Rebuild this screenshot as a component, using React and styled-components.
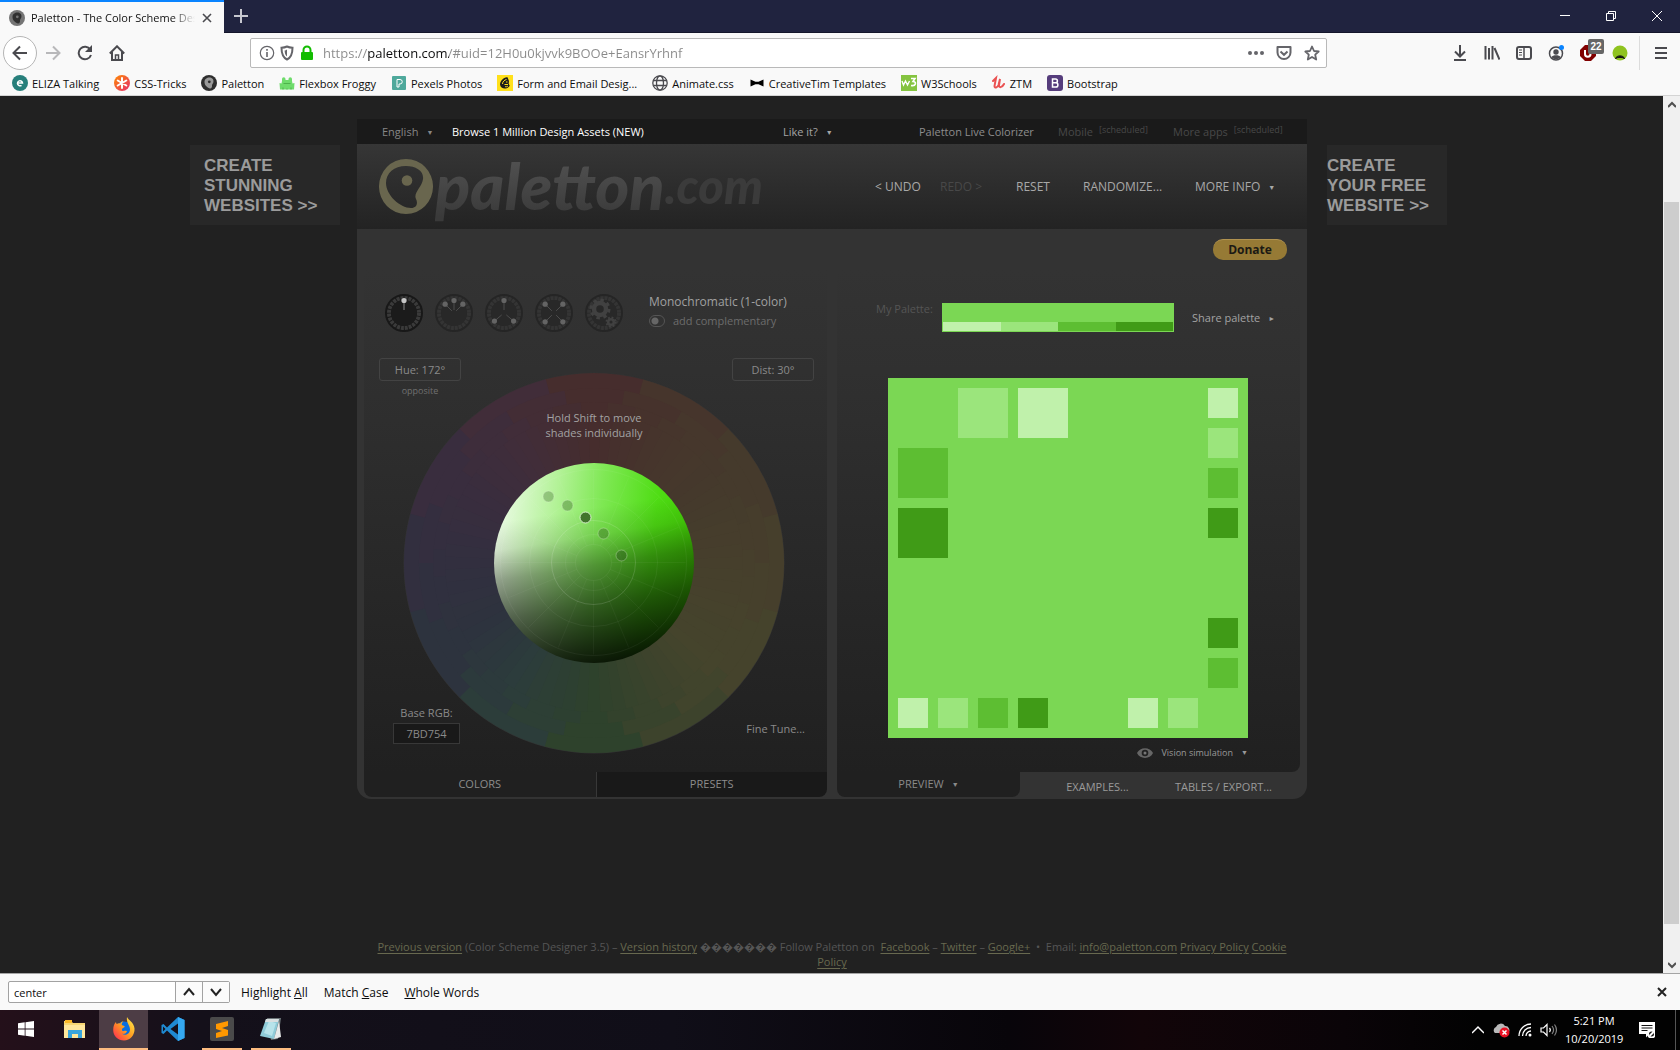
import React from "react";
import styled, { createGlobalStyle, css } from "styled-components";

const ui = '"Open Sans", "Noto Sans", sans-serif';
const shades = {
  base: "#7bd754",
  pale: "#c0f1ab",
  light: "#9be57c",
  mid: "#5dbe32",
  dark: "#409b17",
};

const Global = createGlobalStyle`
  *, *::before, *::after { box-sizing: border-box; }
  body { margin: 0; background: #212121; font-family: ${ui}; font-size: 11px; line-height: 15px; }
  button, input { font: inherit; color: inherit; margin: 0; padding: 0; border: 0; background: none; }
  button { cursor: pointer; white-space: nowrap; }
  a { color: inherit; text-decoration: none; }
  svg { display: block; flex: none; }
`;

const Screen = styled.div`
  display: flex;
  flex-direction: column;
  min-height: 100vh;
`;

/* ---------- browser chrome ---------- */

const TitleBar = styled.header`
  display: flex;
  height: 33px;
  background: #20233f;
  border-bottom: 1px solid #14162b;
  color: #f9f9fa;
`;
const Tab = styled.div`
  display: flex;
  align-items: center;
  gap: 6px;
  width: 224px;
  height: 33px;
  padding: 0 11px 0 9px;
  border-top: 2px solid #0a84ff;
  background: #f9f9f9;
  color: #111;
`;
const TabTitle = styled.span`
  flex: 1;
  overflow: hidden;
  white-space: nowrap;
  mask-image: linear-gradient(to right, #000 86%, transparent 100%);
`;
const IconButton = styled.button`
  display: grid;
  place-items: center;
  flex: none;
  width: ${(p) => p.$w || 32}px;
  height: ${(p) => p.$h || 32}px;
  margin-left: ${(p) => (p.$end ? "auto" : 0)};
  color: ${(p) => p.$color || "#4a4a4f"};
`;
const WindowButtons = styled.div`
  display: flex;
  margin-left: auto;
`;
const Toolbar = styled.nav`
  display: flex;
  align-items: center;
  height: 40px;
  padding: 0 3px;
  background: #f9f9f9;
`;
const BackButton = styled(IconButton)`
  width: 34px;
  height: 34px;
  border: 1px solid #b5b5b5;
  border-radius: 50%;
  background: #fff;
`;
const UrlBar = styled.div`
  display: flex;
  align-items: center;
  flex: 1;
  gap: 4px;
  height: 30px;
  margin: 0 117px;
  padding: 0 6px 0 8px;
  border: 1px solid #b9b9b9;
  border-radius: 2px;
  background: #fff;
  color: #65656a;
`;
const UrlInput = styled.input`
  flex: 1;
  min-width: 0;
  height: 24px;
  margin-left: 4px;
  font-size: 13px;
  outline: none;
  color: transparent;
  background: linear-gradient(to right, #8a8a8a 45px, #0c0c0d 45px, #0c0c0d 126px, #8a8a8a 126px);
  -webkit-background-clip: text;
  background-clip: text;
`;
const UrlActions = styled.div`
  display: flex;
  gap: 12px;
`;
const Separator = styled.span`
  width: 1px;
  height: 34px;
  margin: 0 5px 0 3px;
  background: #dcdcdc;
`;
const Badge = styled.span`
  position: absolute;
  top: 2px;
  left: 16px;
  width: 16px;
  height: 15px;
  border-radius: 2px;
  background: #666;
  color: #fff;
  font: bold 10px/15px "Liberation Sans", sans-serif;
`;
const BadgeButton = styled(IconButton)`
  position: relative;
`;
const Bookmarks = styled.nav`
  display: flex;
  height: 23px;
  padding: 0 0 2px 12px;
  gap: 15px;
  background: #f9f9f9;
  border-bottom: 1px solid #d4d4d4;
`;
const Bookmark = styled.a`
  display: flex;
  align-items: center;
  gap: 4px;
  height: 20px;
  color: #0c0c0d;
  white-space: nowrap;
`;

/* ---------- page ---------- */

const Viewport = styled.div`
  display: flex;
  flex: 1;
`;
const Page = styled.main`
  flex: 1;
  min-width: 0;
  padding: 23px 0 0 1px;
  background: #212121;
`;
const ScrollBar = styled.div`
  display: flex;
  flex-direction: column;
  justify-content: space-between;
  width: 17px;
  background: #f0f0f0;
  color: #505050;
`;
const Thumb = styled.div`
  height: 722px;
  margin: 89px 1px auto;
  background: #cdcdcd;
`;
const Columns = styled.div`
  display: grid;
  grid-template-columns: minmax(0, 1fr) 950px minmax(0, 1fr);
  align-items: start;
`;
const Ad = styled.a`
  justify-self: ${(p) => (p.$side === "left" ? "end" : "start")};
  width: ${(p) => (p.$side === "left" ? 150 : 120)}px;
  margin: 26px ${(p) => (p.$side === "left" ? 17 : 0)}px 0 ${(p) => (p.$side === "left" ? 0 : 20)}px;
  padding: 11px 0 9px ${(p) => (p.$side === "left" ? 14 : 0)}px;
  background: #282828;
  color: #9b9b9b;
  font: bold 17px/20px "Liberation Sans", Arial, sans-serif;
  white-space: pre-line;
`;
const TopStrip = styled.div`
  display: grid;
  grid-template-columns: 70px 1fr 136px 139px 115px 110px;
  align-items: center;
  height: 25px;
  padding: 0 24px 0 25px;
  background: #1a1a1a;
  color: #868686;
  white-space: nowrap;
`;
const StripLink = styled.a`
  color: ${(p) => (p.$tone === "bright" ? "#fff" : p.$tone === "off" ? "#484848" : "#8d8d8d")};
`;
const StripButton = styled.button`
  text-align: left;
  color: ${(p) => (p.$tone === "light" ? "#a5a5a5" : "#868686")};
`;
const Caret = styled.span`
  margin-left: 8px;
  font-size: 7px;
  vertical-align: 1px;
`;
const Scheduled = styled.sup`
  margin-left: 6px;
  font-size: 9px;
  line-height: 0;
  vertical-align: 3px;
`;
const Masthead = styled.div`
  display: flex;
  align-items: center;
  justify-content: space-between;
  height: 85px;
  padding: 0 24px 0 22px;
  background: linear-gradient(#363636, #232323);
`;
const Brand = styled.a`
  display: flex;
  align-items: center;
  font: italic 900 65px/80px Lato, sans-serif;
`;
const BrandName = styled.span`
  margin: 0 0 4px 2px;
  color: transparent;
  background: linear-gradient(#505050 20%, #3a3a3a 90%);
  background-clip: text;
`;
const BrandSuffix = styled.span`
  margin-bottom: 4px;
  padding-right: 4px;
  font-size: 49px;
  color: #3b3b3b;
`;
const Menu = styled.nav`
  display: grid;
  grid-template-columns: 65px 76px 67px 112px 88px;
  font-size: 12px;
`;
const MenuButton = styled.button`
  text-align: left;
  color: ${(p) => (p.disabled ? "#484848" : "#a8a8a8")};
`;
const Body = styled.div`
  padding: 10px 7px 2px;
  background: #333;
  border-radius: 0 0 14px 14px;
`;
const Donate = styled.button`
  display: block;
  width: 74px;
  height: 21px;
  margin: 0 13px 10px auto;
  padding-bottom: 2px;
  border-radius: 10px;
  background: #967a35;
  border-top: 1px solid #b09250;
  color: #1c1a14;
  font-size: 12px;
  font-weight: 700;
`;
const Panels = styled.div`
  display: grid;
  grid-template-columns: 1fr 1fr;
  gap: 10px;
`;
const Panel = styled.section`
  display: flex;
  flex-direction: column;
`;
const PanelBody = styled.div`
  height: 502px;
  background: linear-gradient(#333, #303030 20%, #202020);
  border-radius: ${(p) => (p.$round ? "0 0 8px 0" : "0")};
`;

/* left panel */
const Schemes = styled.div`
  display: flex;
  gap: 12px;
  padding: 24px 0 0 21px;
`;
const SchemeText = styled.div`
  display: flex;
  flex-direction: column;
  gap: 4px;
  margin-left: 14px;
  color: #a0a0a0;
`;
const SchemeName = styled.span`
  font-size: 12px;
`;
const SchemeButton = styled.button`
  width: 38px;
  height: 38px;
`;
const Complement = styled.label`
  display: flex;
  align-items: center;
  gap: 8px;
  color: #6c6c6c;
`;
const Toggle = styled.input.attrs({ type: "checkbox" })`
  appearance: none;
  width: 16px;
  height: 12px;
  border: 1px solid #555;
  border-radius: 6px;
  background: radial-gradient(circle at 5px 5px, #666 3px, transparent 4px);
`;
const Stack = styled.div`
  display: grid;
  margin: 26px 13px 0 15px;
  & > * { grid-area: 1 / 1; }
`;
const Wheel = styled.div`
  display: grid;
  justify-self: start;
  justify-items: center;
  width: 382px;
  height: 382px;
  margin: 14px 0 0 24px;
  & > * { grid-area: 1 / 1; }
`;
const Hint = styled.p`
  margin: 38px 0 0;
  width: 110px;
  text-align: center;
  color: #a3a3a3;
`;
const Disc = styled.div`
  align-self: center;
  width: 200px;
  height: 200px;
  border-radius: 50%;
  background:
    linear-gradient(171deg, transparent 26%, rgba(0,0,0,.1) 38%, rgba(0,0,0,.36) 51%, rgba(0,0,0,.6) 68%, rgba(0,0,0,.9) 94%),
    linear-gradient(97deg, #ecfbe6 4%, #b2f296 30%, #7fe854 50%, #4fdd14 75%, #3fce00 100%);
`;
const HueBox = styled.div`
  display: flex;
  flex-direction: column;
  gap: 2px;
  width: 82px;
  justify-self: ${(p) => (p.$right ? "end" : "start")};
  align-self: start;
`;
const ValueButton = styled.button`
  height: 23px;
  border: 1px solid #434343;
  border-radius: 3px;
  color: #8a8a8a;
`;
const Opposite = styled.button`
  font-size: 9px;
  color: #707070;
`;
const BaseRgb = styled.label`
  display: flex;
  flex-direction: column;
  gap: 3px;
  justify-self: start;
  align-self: end;
  width: 67px;
  margin: 0 0 10px 14px;
  text-align: center;
  color: #8a8a8a;
`;
const RgbInput = styled.input`
  width: 67px;
  height: 21px;
  border: 1px solid #383838;
  background: #191919;
  text-align: center;
`;
const FineTune = styled.button`
  justify-self: end;
  align-self: end;
  margin: 0 9px 18px 0;
  color: #8a8a8a;
`;
const LeftTabs = styled.div`
  display: grid;
  grid-template-columns: 1fr 1fr;
  height: 25px;
  border-radius: 0 0 8px 8px;
  overflow: hidden;
`;
const LeftTab = styled.button`
  padding-bottom: 2px;
  color: #8c8c8c;
  background: ${(p) => (p.$active ? "#202020" : "#191919")};
  & + & { border-left: 1px solid #383838; }
`;

/* right panel */
const PaletteRow = styled.div`
  display: flex;
  align-items: center;
  padding: 33px 0 0 39px;
  color: #a3a3a3;
`;
const PaletteLabel = styled.span`
  align-self: start;
  width: 66px;
  line-height: 12px;
  color: #555;
`;
const Strip = styled.div`
  display: flex;
  align-items: flex-end;
  width: 232px;
  height: 29px;
  padding: 1px;
  margin-right: 18px;
  background: ${shades.base};
`;
const StripShade = styled.span`
  flex: 1;
  height: 9px;
  background: ${(p) => p.$c};
`;
const Preview = styled.div`
  display: grid;
  grid-template: repeat(36, 10px) / repeat(36, 10px);
  width: 360px;
  margin: 46px 0 0 51px;
  background: ${shades.base};
`;
const Square = styled.span`
  grid-column: ${(p) => p.$x + 1} / span ${(p) => p.$s};
  grid-row: ${(p) => p.$y + 1} / span ${(p) => p.$s};
  background: ${(p) => p.$c};
`;
const Vision = styled.button`
  display: flex;
  align-items: center;
  gap: 8px;
  margin: 7px 52px 0 auto;
  font-size: 9px;
  line-height: 15px;
  color: #999;
`;
const RightTabs = styled.div`
  display: grid;
  grid-template-columns: 183px 155px 1fr;
  height: 25px;
  color: #9a9a9a;
`;
const PreviewTab = styled.button`
  padding-bottom: 2px;
  border-radius: 0 0 8px 8px;
  background: #202020;
  color: #8a8a8a;
`;
const OutTab = styled.button`
  padding-top: 3px;
  ${(p) => p.$last && css`text-align: left;`}
`;
const Footer = styled.footer`
  width: 914px;
  margin: 140px auto 0;
  text-align: center;
  color: #555;
  a { color: #68694f; text-decoration: underline; text-underline-offset: 2px; }
`;

/* ---------- find bar and taskbar ---------- */

const FindBar = styled.form`
  display: flex;
  align-items: center;
  height: 37px;
  padding: 0 8px;
  border-top: 1px solid #a5a5a5;
  background: #f9f9f9;
  color: #0c0c0d;
  font-size: 12px;
`;
const FindGroup = styled.div`
  display: flex;
  height: 22px;
  margin-right: 11px;
  border: 1px solid #a2a2a2;
  border-radius: 2px;
  background: #fff;
`;
const FindInput = styled.input`
  width: 166px;
  padding: 0 5px;
  font-size: 11px;
`;
const FindStep = styled(IconButton)`
  width: 27px;
  height: 20px;
  border-left: 1px solid #a2a2a2;
  background: #fbfbfb;
  color: #222;
`;
const FindOption = styled.button`
  margin-right: 16px;
`;
const TaskBar = styled.footer`
  display: flex;
  align-items: center;
  height: 40px;
  padding-left: 1px;
  background: linear-gradient(to right, #24101a, #14101a 12%, #100e18 40%, #08050a 60%, #120509 68%, #0a0408 80%, #020202 88%);
  color: #fff;
`;
const Task = styled.button`
  display: grid;
  place-items: center;
  width: 49px;
  height: 40px;
  padding-bottom: 2px;
  background:
    linear-gradient(${(p) => (p.$open ? "#fdbc80, #fdbc80" : "transparent, transparent")})
      center bottom / ${(p) => (p.$active ? 49 : 40)}px 2px no-repeat,
    ${(p) => (p.$active ? "#4d3d45" : "transparent")};
`;
const Tray = styled.div`
  display: flex;
  align-items: center;
  gap: 8px;
  height: 40px;
  margin-left: auto;
  padding-right: 4px;
`;
const Clock = styled.time`
  width: 58px;
  line-height: 18px;
  text-align: center;
  white-space: nowrap;
`;
const Notice = styled.div`
  display: flex;
  align-items: center;
  height: 40px;
  padding: 0 20px 0 8px;
  border-right: 1px solid #555;
`;

/* ---------- drawings ---------- */

const Svg = ({ s = 16, w, h, box, children, ...rest }) => (
  <svg
    width={w || s}
    height={h || s}
    viewBox={box || `0 0 ${w || s} ${h || s}`}
    fill="none"
    stroke="currentColor"
    strokeWidth="2"
    aria-hidden="true"
    {...rest}
  >
    {children}
  </svg>
);

const PalettonIcon = ({ back, face }) => (
  <Svg stroke="none">
    <circle cx="8" cy="8" r="8" fill={back} />
    <path d="M8.5 2.5c3 0 4.600 2.400 3.800 4.900-.6 1.500-1.500 2-1.300 3.400.2 1.400-.7 3-2.200 2.600C6 12.600 3.500 10 3.500 7s2.300-4.500 5-4.500z" fill={face} />
    <circle cx="8.300" cy="6.800" r="1.400" fill={back} />
  </Svg>
);

const bookmarks = [
  ["ELIZA Talking", <Svg stroke="none"><circle cx="8" cy="8" r="8" fill="#277f7b" /><path d="M5.500 8h5a2.500 2.500 0 1 0-1 2.300" fill="none" stroke="#fff" strokeWidth="1.500" /></Svg>],
  ["CSS-Tricks", <Svg stroke="none"><defs><linearGradient id="ct" x1="0" y1="0" x2="1" y2="1"><stop offset="0" stopColor="#ff8a00" /><stop offset="1" stopColor="#e52e71" /></linearGradient></defs><circle cx="8" cy="8" r="8" fill="url(#ct)" /><path d="M8 3v10M3.700 5.500l8.600 5M12.300 5.500l-8.600 5" stroke="#fff" strokeWidth="2" strokeLinecap="round" /></Svg>],
  ["Paletton", <PalettonIcon back="#2f2f2f" face="#9a9a9a" />],
  ["Flexbox Froggy", <Svg stroke="none"><path d="M3 6V4a1.500 1.500 0 0 1 3.500 0v1h3V4A1.500 1.500 0 0 1 13 4v2l.5 2.500L15.500 8l-.5 6.500H1L.5 8l2 .5z" fill="#6fdc6c" /><path d="M4 14.500v-2M8 14.500v-1M12 14.500v-2M4.500 8.500h7" stroke="#4db34b" strokeWidth="1" /></Svg>],
  ["Pexels Photos", <Svg stroke="none"><rect x="1" y="1" width="14" height="14" rx="1" fill="#4fa99c" /><path d="M6 12V4.500h3a2.200 2.200 0 0 1 0 4.500H8v3z" stroke="#fff" strokeWidth="1" fill="none" /></Svg>],
  ["Form and Email Desig...", <Svg stroke="none"><rect width="16" height="16" fill="#ffe01b" /><path d="M10.500 2.200C7 1.500 3 6 3 9.500c.3 3 3 4.500 6 4 2-.4 3.200-1.600 3.700-3l-1-1.500.3-3z" fill="#1c1c1c" /><path d="M5.500 9c0-2.500 2-4 4-4.500M7.500 9.500h3.500M9 7h1.500M8 11.500c1 .5 2 .3 3-.5" stroke="#ffe01b" strokeWidth="1" /></Svg>],
  ["Animate.css", <Svg strokeWidth="1.300" color="#4a4a4f"><circle cx="8" cy="8" r="7.200" /><ellipse cx="8" cy="8" rx="3.500" ry="7.200" /><path d="M1.500 5.500h13M1.500 10.500h13" /></Svg>],
  ["CreativeTim Templates", <Svg stroke="none"><path d="M1.500 4.500l5 2.200h3l5-2.200v7l-5-2.200h-3l-5 2.200z" fill="#000" /></Svg>],
  ["W3Schools", <Svg stroke="none"><rect width="16" height="16" y="0" fill="#85c440" /><path d="M1 6l1.500 4L4.500 6l2 4L8.500 6" stroke="#fff" strokeWidth="1.400" /><path d="M10 3.500h4L12 6.500c4 0 3 5-2 4" stroke="#fff" strokeWidth="1.600" /></Svg>],
  ["ZTM", <Svg w={14} h={16} strokeLinecap="round" color="#ea5252"><path d="M1 6l3-3-1.500 8c0 2.500 3 2 4-1L8 4 7 10c-.3 3 3 3 5-1" strokeWidth="2" /></Svg>],
  ["Bootstrap", <Svg stroke="none"><rect width="16" height="16" rx="3" fill="#563d7c" /><path d="M5.500 4h3a1.900 1.900 0 0 1 0 3.800h-3zM5.500 7.800h3.300a2.100 2.100 0 0 1 0 4.200H5.500z" stroke="#fff" strokeWidth="1.500" /></Svg>],
];

const polar = (r, deg, c = 191) => {
  const a = ((deg - 90) * Math.PI) / 180;
  return [c + r * Math.cos(a), c + r * Math.sin(a)];
};
const slice = (r0, r1, a0, a1) => {
  const [x0, y0] = polar(r1, a0);
  const [x1, y1] = polar(r1, a1);
  const [x2, y2] = polar(r0, a1);
  const [x3, y3] = polar(r0, a0);
  return `M${x0} ${y0}A${r1} ${r1} 0 0 1 ${x1} ${y1}L${x2} ${y2}A${r0} ${r0} 0 0 0 ${x3} ${y3}Z`;
};
const hues = [
  [0, 70, 45, 45], [30, 70, 53, 44], [60, 69, 58, 44], [90, 70, 63, 44], [130, 69, 68, 44],
  [150, 61, 67, 44], [180, 46, 66, 44], [215, 44, 60, 60], [240, 45, 51, 62], [270, 50, 47, 63],
  [300, 57, 45, 62], [330, 65, 45, 57], [360, 70, 45, 45],
];
const hueAt = (deg) => {
  const d = (deg + 360) % 360;
  const i = Math.max(1, hues.findIndex((h) => h[0] >= d));
  const [a, b] = [hues[i - 1], hues[i]];
  const t = (d - a[0]) / (b[0] - a[0]);
  return `rgb(${[1, 2, 3].map((k) => Math.round(a[k] + (b[k] - a[k]) * t)).join(",")})`;
};
const rings = [
  { r0: 98, r1: 150, step: 5 },
  { r0: 149, r1: 162, step: 10 },
  { r0: 161, r1: 176, step: 20 },
  { r0: 175, r1: 190, step: 30 },
];
const HueWheel = () => (
  <svg width="382" height="382" viewBox="0 0 382 382" role="img" aria-label="Hue wheel">
    <circle cx="191" cy="191" r="190.500" fill="#333" />
    {rings.map(({ r0, r1, step }) =>
      Array.from({ length: 360 / step }, (_, i) => (
        <path key={`${r1}-${i}`} d={slice(r0, r1, (i - 0.5) * step, (i + 0.5) * step + 0.300)} fill={hueAt(i * step)} />
      ))
    )}
  </svg>
);

const spots = [
  [54.500, 33.500, 0.300], [73.500, 42.500, 0.350], [91.500, 54.500, 1], [109.500, 70.500, 0.350], [127.500, 92.500, 0.450],
];
const ShadeMarks = () => (
  <svg width="200" height="200" viewBox="0 0 200 200" fill="none" role="img" aria-label="Shade picker">
    {[18, 28, 42, 64, 93].map((r) => (
      <circle key={r} cx="99.500" cy="99.500" r={r} stroke="#fff" strokeOpacity={r === 42 ? 0.140 : 0.050} />
    ))}
    <g stroke="#fff" strokeOpacity=".04">
      {Array.from({ length: 16 }, (_, i) => {
        const [x0, y0] = polar(18, i * 22.500, 99.500);
        const [x1, y1] = polar(92, i * 22.500, 99.500);
        return <path key={i} d={`M${x0} ${y0}L${x1} ${y1}`} />;
      })}
    </g>
    {spots.map(([x, y, o]) => (
      <circle key={x} cx={x} cy={y} r="5.500" fill={o === 1 ? "#41752c" : "#2f5a1e"} fillOpacity={o}
        stroke="#dff5d5" strokeOpacity={o === 1 ? 0.900 : 0.350} />
    ))}
  </svg>
);

const Scheme = ({ pins = [], active, gears }) => (
  <svg width="38" height="38" viewBox="0 0 38 38" fill="none" aria-hidden="true">
    <circle cx="19" cy="19" r="18" fill={active ? "#1b1b1b" : "#2a2a2a"} stroke={active ? "#181818" : "#252525"} strokeWidth="2" />
    <circle cx="19" cy="19" r="15" stroke={active ? "#3a3a3a" : "#343434"} strokeWidth="4" strokeDasharray="2.900 1.030" />
    <circle cx="19" cy="19" r="13" fill={active ? "#1b1b1b" : "#282828"} />
    {pins.map((a) => {
      const [x, y] = polar(12.500, a, 19);
      const [x1, y1] = polar(3, a, 19);
      return (
        <g key={a}>
          <path d={`M${x1} ${y1}L${x} ${y}`} stroke={active ? "#888" : "#4c4c4c"} />
          <circle cx={x} cy={y} r="2.600" fill={active ? "#c6c6c6" : "#646464"} />
        </g>
      );
    })}
    {gears && (
      <g stroke="#414141">
        <circle cx="15" cy="15" r="6" strokeWidth="4.500" />
        <circle cx="15" cy="15" r="9" strokeWidth="3" strokeDasharray="3.500 3.570" />
        <circle cx="26" cy="28" r="2.800" strokeWidth="2.500" />
        <circle cx="26" cy="28" r="4.500" strokeWidth="2" strokeDasharray="1.800 1.730" />
      </g>
    )}
  </svg>
);

const squares = [
  [7, 1, 5, "light"], [13, 1, 5, "pale"], [1, 7, 5, "mid"], [1, 13, 5, "dark"],
  [32, 1, 3, "pale"], [32, 5, 3, "light"], [32, 9, 3, "mid"], [32, 13, 3, "dark"],
  [32, 24, 3, "dark"], [32, 28, 3, "mid"],
  [1, 32, 3, "pale"], [5, 32, 3, "light"], [9, 32, 3, "mid"], [13, 32, 3, "dark"],
  [24, 32, 3, "pale"], [28, 32, 3, "light"],
];

const Chrome = () => (
  <>
    <TitleBar>
      <Tab>
        <PalettonIcon back="#757575" face="#303030" />
        <TabTitle>Paletton - The Color Scheme Designer</TabTitle>
        <IconButton $w={12} $h={16} aria-label="Close tab">
          <Svg s={10} strokeWidth="1.600"><path d="M1 1l8 8M9 1l-8 8" /></Svg>
        </IconButton>
      </Tab>
      <IconButton $w={34} $color="#c6c7cf" aria-label="New tab">
        <Svg s={14}><path d="M7 0v14M0 7h14" /></Svg>
      </IconButton>
      <WindowButtons>
        <IconButton $w={46} $color="#fff" aria-label="Minimize"><Svg s={10} strokeWidth="1"><path d="M0 4.500h10" /></Svg></IconButton>
        <IconButton $w={46} $color="#fff" aria-label="Restore"><Svg s={10} strokeWidth="1"><path d="M.5 2.500h7v7h-7zM2.500 2.500v-2h7v7h-2" /></Svg></IconButton>
        <IconButton $w={46} $color="#fff" aria-label="Close"><Svg s={10} strokeWidth="1"><path d="M0 0l10 10M10 0L0 10" /></Svg></IconButton>
      </WindowButtons>
    </TitleBar>
    <Toolbar>
      <BackButton aria-label="Back"><Svg><path d="M15 8H1.500M8 1.500L1.500 8 8 14.500" /></Svg></BackButton>
      <IconButton $color="#b8b8ba" aria-label="Forward"><Svg><path d="M1 8h13.500M8 1.500L14.500 8 8 14.500" /></Svg></IconButton>
      <IconButton aria-label="Reload"><Svg><path d="M13.300 4.500A6.300 6.300 0 1 0 14 10" /><path d="M15 0v7H8z" fill="currentColor" stroke="none" /></Svg></IconButton>
      <IconButton aria-label="Home"><Svg><path d="M.8 8.500L8 1.300l7.200 7.200M3 7v8h10V7" /><path d="M6.500 15v-5h3v5z" strokeWidth="1.500" /></Svg></IconButton>
      <UrlBar>
        <Svg strokeWidth="1.200"><circle cx="8" cy="8" r="6.700" /><path d="M8 7v5M8 4v1.800" strokeWidth="1.600" /></Svg>
        <Svg><path d="M8 1.500c2 1 4 1.200 5.500 1.200 0 6-1.500 9.800-5.500 11.800C4 12.500 2.500 8.700 2.500 2.700 4 2.700 6 2.500 8 1.500z" /><path d="M8 4.500v7c-1.500-1-2.300-3-2.400-6 1 0 1.700-.3 2.400-1z" fill="currentColor" stroke="none" /></Svg>
        <Svg color="#12bc00"><rect x="2" y="7" width="12" height="8" rx="1" fill="currentColor" stroke="none" /><path d="M4.500 8V5a3.500 3.500 0 0 1 7 0v3" /></Svg>
        <UrlInput aria-label="Address" defaultValue="https://paletton.com/#uid=12H0u0kjvvk9BOOe+EansrYrhnf" />
        <UrlActions>
          <Svg stroke="none" fill="currentColor"><circle cx="2" cy="8" r="2" /><circle cx="8" cy="8" r="2" /><circle cx="14" cy="8" r="2" /></Svg>
          <Svg><path d="M1.500 2h13v5.500a6.500 6.500 0 0 1-13 0z" strokeLinejoin="round" /><path d="M4.500 6.500L8 9.800l3.500-3.300" /></Svg>
          <Svg><path d="M8 1.500l2 4.500 4.700.5-3.500 3.200 1 4.800L8 12l-4.200 2.500 1-4.800L1.300 6.500 6 6z" strokeLinejoin="round" strokeWidth="1.800" /></Svg>
        </UrlActions>
      </UrlBar>
      <IconButton aria-label="Downloads"><Svg><path d="M8 0v11M3 6.500l5 5 5-5M2 15h12" /></Svg></IconButton>
      <IconButton aria-label="Library"><Svg><path d="M1.500 1v13.500M5 3v11.500M8.500 1v13.500M10.500 3l5 11.500" /></Svg></IconButton>
      <IconButton aria-label="Sidebars"><Svg><rect x="1" y="2" width="14" height="12" rx="2" /><path d="M8 2v12" strokeWidth="1.500" /><path d="M3 5h3M3 7.500h3M3 10h3" strokeWidth="1" /></Svg></IconButton>
      <IconButton aria-label="Account"><Svg strokeWidth="1.500"><circle cx="8" cy="8.500" r="6.500" /><circle cx="8" cy="7" r="2.700" fill="currentColor" stroke="none" /><path d="M3.500 12c1-2.500 8-2.500 9 0-2 3-7 3-9 0z" fill="currentColor" stroke="none" /><circle cx="13.500" cy="2.500" r="2.500" fill="#0a84ff" stroke="none" /></Svg></IconButton>
      <BadgeButton aria-label="Content blocker">
        <Svg stroke="none"><path d="M5 0h6l5 5v6l-5 5H5l-5-5V5z" fill="#800000" /><path d="M5 5v4a2.700 2.700 0 0 0 5.500 0V5" stroke="#fff" /></Svg>
        <Badge>22</Badge>
      </BadgeButton>
      <IconButton aria-label="Extension"><Svg stroke="none"><circle cx="8" cy="8" r="7.500" fill="#8fc31f" /><path d="M3.500 13.500c1-3.500 8-3.500 9 0-2-1.500-7-1.500-9 0z" fill="#111" stroke="#111" strokeWidth="1" /></Svg></IconButton>
      <Separator />
      <IconButton aria-label="Menu"><Svg><path d="M2 3h12M2 8h12M2 13h12" /></Svg></IconButton>
    </Toolbar>
    <Bookmarks>
      {bookmarks.map(([name, icon]) => (
        <Bookmark key={name} href="#">{icon}{name}</Bookmark>
      ))}
    </Bookmarks>
  </>
);

const Paletton = () => (
  <div>
    <TopStrip>
      <StripButton>English<Caret>▼</Caret></StripButton>
      <StripLink href="#" $tone="bright">Browse 1 Million Design Assets (NEW)</StripLink>
      <StripButton $tone="light">Like it?<Caret>▼</Caret></StripButton>
      <StripLink href="#">Paletton Live Colorizer</StripLink>
      <StripLink $tone="off">Mobile<Scheduled>[scheduled]</Scheduled></StripLink>
      <StripLink $tone="off">More apps<Scheduled>[scheduled]</Scheduled></StripLink>
    </TopStrip>
    <Masthead>
      <Brand href="#">
        <svg width="54" height="55" viewBox="0 0 54 55" aria-hidden="true">
          <path fillRule="evenodd" fill="#69664e" d="M27 0a27 27.500 0 1 1 0 55a27 27.500 0 1 1 0-55zM27 7C15 7 7 14 7 24c0 12 14 25 25 25 6 0 7-5 5-9-3-6 6-12 7-20C45 12 37 7 27 7z" />
          <circle cx="28" cy="21.500" r="5.300" fill="#69664e" />
        </svg>
        <BrandName>paletton</BrandName>
        <BrandSuffix>.com</BrandSuffix>
      </Brand>
      <Menu>
        <MenuButton>&lt; UNDO</MenuButton>
        <MenuButton disabled>REDO &gt;</MenuButton>
        <MenuButton>RESET</MenuButton>
        <MenuButton>RANDOMIZE...</MenuButton>
        <MenuButton>MORE INFO<Caret>▼</Caret></MenuButton>
      </Menu>
    </Masthead>
    <Body>
      <Donate>Donate</Donate>
      <Panels>
        <Panel>
          <PanelBody>
            <Schemes>
              <SchemeButton aria-label="Monochromatic"><Scheme active pins={[0]} /></SchemeButton>
              <SchemeButton aria-label="Adjacent"><Scheme pins={[-45, 0, 45]} /></SchemeButton>
              <SchemeButton aria-label="Triad"><Scheme pins={[0, 130, 230]} /></SchemeButton>
              <SchemeButton aria-label="Tetrad"><Scheme pins={[45, 135, 225, 315]} /></SchemeButton>
              <SchemeButton aria-label="Free style"><Scheme gears /></SchemeButton>
              <SchemeText>
                <SchemeName>Monochromatic (1-color)</SchemeName>
                <Complement><Toggle />add complementary</Complement>
              </SchemeText>
            </Schemes>
            <Stack>
              <Wheel>
                <HueWheel />
                <Hint>Hold Shift to move shades individually</Hint>
                <Disc><ShadeMarks /></Disc>
              </Wheel>
              <HueBox>
                <ValueButton>Hue: 172°</ValueButton>
                <Opposite>opposite</Opposite>
              </HueBox>
              <HueBox $right><ValueButton>Dist: 30°</ValueButton></HueBox>
              <BaseRgb>Base RGB:<RgbInput defaultValue="7BD754" /></BaseRgb>
              <FineTune>Fine Tune...</FineTune>
            </Stack>
          </PanelBody>
          <LeftTabs>
            <LeftTab $active>COLORS</LeftTab>
            <LeftTab>PRESETS</LeftTab>
          </LeftTabs>
        </Panel>
        <Panel>
          <PanelBody $round>
            <PaletteRow>
              <PaletteLabel>My Palette:</PaletteLabel>
              <Strip>
                {["pale", "light", "mid", "dark"].map((n) => <StripShade key={n} $c={shades[n]} />)}
              </Strip>
              <button>Share palette<Caret>►</Caret></button>
            </PaletteRow>
            <Preview>
              {squares.map(([x, y, s, c]) => <Square key={`${x}-${y}`} $x={x} $y={y} $s={s} $c={shades[c]} />)}
            </Preview>
            <Vision>
              <Svg w={16} h={10} stroke="none"><path d="M0 5c3-6.500 13-6.500 16 0-3 6.500-13 6.500-16 0z" fill="#666" /><circle cx="8" cy="5" r="3.300" fill="#222" /><circle cx="8" cy="5" r="1.500" fill="#777" /></Svg>
              <span>Vision simulation<Caret>▼</Caret></span>
            </Vision>
          </PanelBody>
          <RightTabs>
            <PreviewTab>PREVIEW<Caret>▼</Caret></PreviewTab>
            <OutTab>EXAMPLES...</OutTab>
            <OutTab $last>TABLES / EXPORT...</OutTab>
          </RightTabs>
        </Panel>
      </Panels>
    </Body>
    <Footer>
      <a href="#">Previous version</a> (Color Scheme Designer 3.5) – <a href="#">Version history</a> ������� Follow Paletton on{" "}
      &nbsp;<a href="#">Facebook</a> – <a href="#">Twitter</a> – <a href="#">Google+</a> &nbsp;•&nbsp; Email:{" "}
      <a href="#">info@paletton.com</a> <a href="#">Privacy Policy</a> <a href="#">Cookie Policy</a>
    </Footer>
  </div>
);

const Find = () => (
  <FindBar onSubmit={(e) => e.preventDefault()}>
    <FindGroup>
      <FindInput aria-label="Find in page" defaultValue="center" />
      <FindStep type="button" aria-label="Previous match"><Svg s={12}><path d="M1 9l5-6 5 6" /></Svg></FindStep>
      <FindStep type="button" aria-label="Next match"><Svg s={12}><path d="M1 3l5 6 5-6" /></Svg></FindStep>
    </FindGroup>
    <FindOption type="button">Highlight <u>A</u>ll</FindOption>
    <FindOption type="button">Match <u>C</u>ase</FindOption>
    <FindOption type="button"><u>W</u>hole Words</FindOption>
    <IconButton type="button" $end $w={20} $color="#222" aria-label="Close find bar">
      <Svg s={10}><path d="M1 1l8 8M9 1l-8 8" /></Svg>
    </IconButton>
  </FindBar>
);

const Tasks = () => (
  <TaskBar>
    <Task aria-label="Start"><Svg stroke="none" fill="#fff"><path d="M0 2.300l6.700-1v6.300H0zM7.500 1.200L16 0v7.600H7.500zM0 8.400h6.700v6.300L0 13.700zM7.500 8.400H16V16l-8.500-1.200z" /></Svg></Task>
    <Task aria-label="File Explorer"><Svg w={22} h={20} stroke="none"><path d="M0 2h7l2 2h12v15H0z" fill="#f7d774" /><path d="M1 1h7v3H1z" fill="#fbb827" /><path d="M0 6h21v13H0z" fill="#ffe79b" /><path d="M4 19v-8h14v8h-4v-4H8v4z" fill="#39a5dc" /></Svg></Task>
    <Task $active $open aria-label="Firefox">
      <Svg s={24} stroke="none">
        <defs><linearGradient id="ff" x1="1" y1="0" x2="0" y2="1"><stop offset="0" stopColor="#fff44f" /><stop offset=".5" stopColor="#ff9a1f" /><stop offset="1" stopColor="#ff1f5a" /></linearGradient></defs>
        <circle cx="12" cy="12.500" r="8" fill="#0a6fe0" />
        <path d="M15 0c1 3 7 5 7.500 11.500C23 18 18 23.500 12 23.500S1.200 19 1.200 13C1.200 9 2.500 6.500 4 5c0 1 .3 1.600.8 2 1-.7 2.300-.8 3.500-.5C9 5 10.500 4.300 11.500 4.200 10 5.500 9.500 7 9.800 8c1.500.5 2.700 1 3 1.800-.5 1-2.300 1-2.800 2.500-.2 1 .3 2 1.500 1.800 1.500-.3 2.600-.4 3.500.3-.9 2-3 2.800-5 2.400 4 2.500 8-.3 8-4.300C18 8 14 6 15 0z" fill="url(#ff)" />
      </Svg>
    </Task>
    <Task aria-label="Visual Studio Code"><Svg s={24} stroke="none"><path d="M17 0l6.500 3v18L17 24 6 13.500 2.500 17 .5 16V8l2-1L6 10.500z" fill="#1f8ad2" /><path d="M17 6.500v11L9.500 12zM2 9.500v5L4.500 12z" fill="#15111b" /><path d="M17 0l6.500 3v18L17 24z" fill="#35a8f0" /></Svg></Task>
    <Task $open aria-label="Sublime Text"><Svg s={24} stroke="none"><rect width="24" height="24" rx="2" fill="#4a4a4a" /><path d="M18 4v5l-6 2 6 2v5.500L6 21v-5l6-2-6-2V7z" fill="#ff9800" /></Svg></Task>
    <Task $open aria-label="Notepad"><Svg s={24} stroke="none"><path d="M8 1h14l-3 21-7 1z" fill="#6b7477" /><path d="M7 2h13l-5 20L1 19z" fill="#8fcbd8" /><path d="M10 4l7 2-4 13-8-3z" fill="#b7e3ea" /><path d="M7 2h13l-1 3H6z" fill="#d9dfe0" /><path d="M15 22l5-18 2 16z" fill="#e8eaea" /></Svg></Task>
    <Tray>
      <Svg s={12} strokeWidth="1.500"><path d="M0 9l6-6 6 6" /></Svg>
      <Svg w={18} h={16} stroke="none"><path d="M3 11a3.500 3.500 0 0 1 1-6 5 5 0 0 1 9-1 4 4 0 0 1 3 7z" fill="#b9b9b9" /><circle cx="12.500" cy="10.500" r="5" fill="#e81123" /><path d="M10.500 8.500l4 4M14.500 8.500l-4 4" stroke="#fff" strokeWidth="1.500" /></Svg>
      <Svg s={14} strokeWidth="1.300"><path d="M1 13A12 12 0 0 1 13 1M4.500 13A8.500 8.500 0 0 1 13 4.500M8 13a5 5 0 0 1 5-5" /><circle cx="12" cy="12" r="1.500" fill="#fff" stroke="none" /></Svg>
      <Svg w={17} h={14} strokeWidth="1.200"><path d="M1 5h2.500L7 1.500v11L3.500 9H1z" /><path d="M9.500 5c1 1.200 1 2.800 0 4" /><path d="M12 3c2 2.500 2 5.500 0 8M14.500 1.500c2.500 3.500 2.500 7.500 0 11" opacity=".5" /></Svg>
      <Clock>5:21 PM<br />10/20/2019</Clock>
      <Notice><Svg s={16} stroke="none"><path d="M0 0h16v12h-6l-3 3.500V12H0z" fill="#fff" /><path d="M2.500 3.500h11M2.500 6h11M2.500 8.500h6" stroke="#111" strokeWidth="1" /><circle cx="12.500" cy="12" r="3.500" fill="#111" stroke="#fff" /><path d="M10.500 14l4-4" stroke="#fff" /></Svg></Notice>
    </Tray>
  </TaskBar>
);

export default function App() {
  return (
    <Screen>
      <Global />
      <Chrome />
      <Viewport>
        <Page>
          <Columns>
            <Ad href="#" $side="left">{"CREATE\nSTUNNING\nWEBSITES >>"}</Ad>
            <Paletton />
            <Ad href="#" $side="right">{"CREATE\nYOUR FREE\nWEBSITE >>"}</Ad>
          </Columns>
        </Page>
        <ScrollBar>
          <IconButton $w={17} $h={17} $color="#505050" aria-label="Scroll up"><Svg s={8}><path d="M0 6l4-4 4 4" /></Svg></IconButton>
          <Thumb />
          <IconButton $w={17} $h={17} $color="#505050" aria-label="Scroll down"><Svg s={8}><path d="M0 2l4 4 4-4" /></Svg></IconButton>
        </ScrollBar>
      </Viewport>
      <Find />
      <Tasks />
    </Screen>
  );
}
